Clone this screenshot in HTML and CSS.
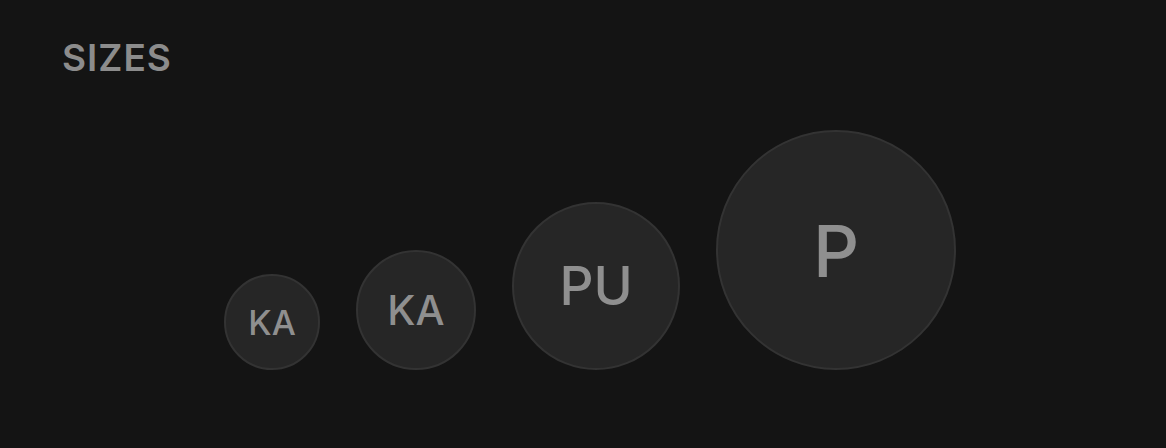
FILE: index.html
```html
<!DOCTYPE html>
<html>
<head>
<meta charset="utf-8">
<link rel="stylesheet" href="styles.css">
</head>
<body>
<section class="demo">
  <h2 class="demo-title">SIZES</h2>
  <div class="avatar-row">
    <div class="avatar avatar-sm">KA</div>
    <div class="avatar avatar-md">KA</div>
    <div class="avatar avatar-lg">PU</div>
    <div class="avatar avatar-xl">P</div>
  </div>
</section>
</body>
</html>
```
FILE: styles.css
```css
html, body {
  margin: 0;
  padding: 0;
  background: #141414;
}
body {
  width: 1166px;
  height: 448px;
  overflow: hidden;
  font-family: Inter, "Noto Sans", sans-serif;
}
.demo {
  padding: 36px 62px 0 62px;
}
.demo-title {
  margin: 0;
  font-size: 37px;
  line-height: 44px;
  font-weight: 600;
  letter-spacing: 1px;
  color: #8c8c8c;
}
.avatar-row {
  display: flex;
  align-items: flex-end;
  gap: 36px;
  margin-top: 50px;
  padding-left: 162px;
}
.avatar {
  box-sizing: border-box;
  border-radius: 50%;
  background: #262626;
  border: 2px solid #333333;
  color: #8f8f8f;
  display: flex;
  align-items: center;
  justify-content: center;
  font-weight: 500;
  flex: none;
}
.avatar-sm { width: 96px; height: 96px; font-size: 34px; }
.avatar-md { width: 120px; height: 120px; font-size: 41px; }
.avatar-lg { width: 168px; height: 168px; font-size: 53px; }
.avatar-xl { width: 240px; height: 240px; font-size: 72px; }
```
